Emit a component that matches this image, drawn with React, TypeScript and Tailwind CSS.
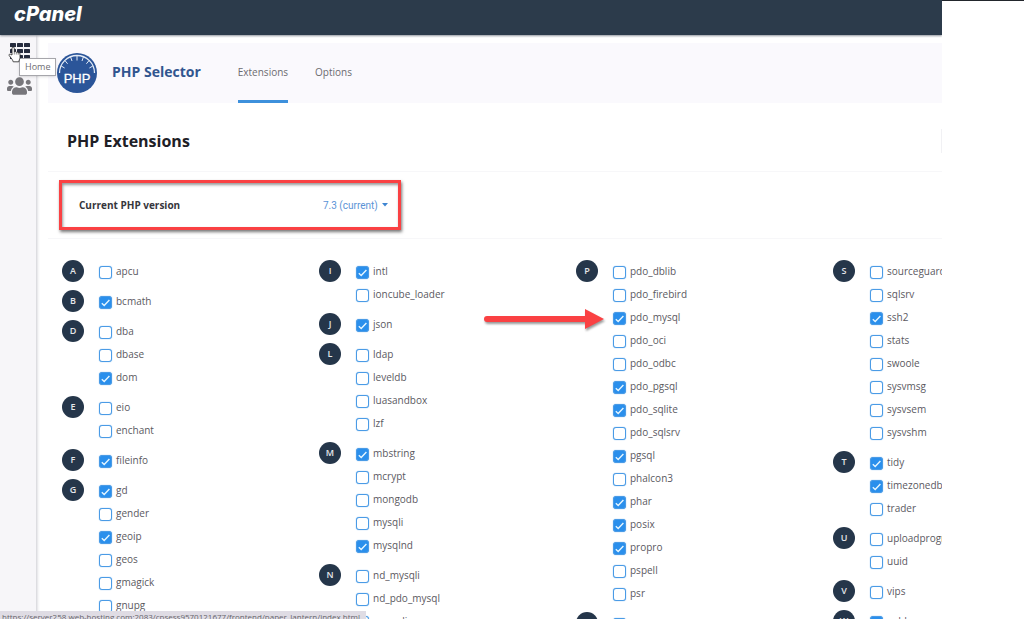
import { FaUsers } from "react-icons/fa";

type Extension = { name: string; on?: boolean };
type Group = { letter: string; items: Extension[] };

const columns: Group[][] = [
  [
    { letter: "A", items: [{ name: "apcu" }] },
    { letter: "B", items: [{ name: "bcmath", on: true }] },
    { letter: "D", items: [{ name: "dba" }, { name: "dbase" }, { name: "dom", on: true }] },
    { letter: "E", items: [{ name: "eio" }, { name: "enchant" }] },
    { letter: "F", items: [{ name: "fileinfo", on: true }] },
    {
      letter: "G",
      items: [
        { name: "gd", on: true },
        { name: "gender" },
        { name: "geoip", on: true },
        { name: "geos" },
        { name: "gmagick" },
        { name: "gnupg" },
      ],
    },
  ],
  [
    { letter: "I", items: [{ name: "intl", on: true }, { name: "ioncube_loader" }] },
    { letter: "J", items: [{ name: "json", on: true }] },
    {
      letter: "L",
      items: [{ name: "ldap" }, { name: "leveldb" }, { name: "luasandbox" }, { name: "lzf" }],
    },
    {
      letter: "M",
      items: [
        { name: "mbstring", on: true },
        { name: "mcrypt" },
        { name: "mongodb" },
        { name: "mysqli" },
        { name: "mysqlnd", on: true },
      ],
    },
    { letter: "N", items: [{ name: "nd_mysqli" }, { name: "nd_pdo_mysql" }, { name: "newrelic" }] },
  ],
  [
    {
      letter: "P",
      items: [
        { name: "pdo_dblib" },
        { name: "pdo_firebird" },
        { name: "pdo_mysql", on: true },
        { name: "pdo_oci" },
        { name: "pdo_odbc" },
        { name: "pdo_pgsql", on: true },
        { name: "pdo_sqlite", on: true },
        { name: "pdo_sqlsrv" },
        { name: "pgsql", on: true },
        { name: "phalcon3" },
        { name: "phar", on: true },
        { name: "posix", on: true },
        { name: "propro", on: true },
        { name: "pspell" },
        { name: "psr" },
      ],
    },
    { letter: "R", items: [{ name: "raphf", on: true }] },
  ],
  [
    {
      letter: "S",
      items: [
        { name: "sourceguardian" },
        { name: "sqlsrv" },
        { name: "ssh2", on: true },
        { name: "stats" },
        { name: "swoole" },
        { name: "sysvmsg" },
        { name: "sysvsem" },
        { name: "sysvshm" },
      ],
    },
    {
      letter: "T",
      items: [{ name: "tidy", on: true }, { name: "timezonedb", on: true }, { name: "trader" }],
    },
    { letter: "U", items: [{ name: "uploadprogress" }, { name: "uuid" }] },
    { letter: "V", items: [{ name: "vips" }] },
    { letter: "W", items: [{ name: "wddx", on: true }] },
  ],
];

const ExtensionRow = ({ name, on }: Extension) => (
  <li className="h-[23px]">
    <label className="flex h-full items-center gap-1">
      <span className="grid place-items-center pt-px">
        <input
          type="checkbox"
          defaultChecked={on}
          className="peer col-start-1 row-start-1 size-[13px] appearance-none rounded-[3px] border border-[#4a9be6] bg-white shadow-[0_0_1px_#4a9be6] checked:bg-[#2a8fec]"
        />
        <svg
          viewBox="0 0 13 13"
          className="pointer-events-none invisible col-start-1 row-start-1 size-[13px] peer-checked:visible"
        >
          <path d="M2.8 7.2 5.2 9.5 10.4 4" fill="none" stroke="#e6f6ff" strokeWidth="1.4" />
        </svg>
      </span>
      <span>{name}</span>
    </label>
  </li>
);

const ExtensionGroup = ({ letter, items }: Group) => (
  <section className="flex items-start gap-[15px]">
    <h3 className="grid size-[22px] place-items-center rounded-full bg-[#25364a] text-[9px] font-semibold text-gray-200">
      {letter}
    </h3>
    <ul>
      {items.map((item) => (
        <ExtensionRow key={item.name} {...item} />
      ))}
    </ul>
  </section>
);

const PhpLogo = () => (
  <svg viewBox="0 0 40 40" className="size-10">
    <circle cx="20" cy="20" r="20" fill="#2b5599" />
    <path d="M2.500 20a17.500 17.500 0 0 1 35 0" fill="none" stroke="#e3ebf6" strokeWidth="1.3" />
    <path
      d="M20 2.500v5M13.600 4l1.400 4M26.400 4 25 8M8 7.600l2.600 3.200M32 7.600l-2.600 3.200M4.200 13l3.400 2M35.800 13l-3.400 2"
      stroke="#e3ebf6"
      strokeWidth="1"
    />
    <text
      x="20"
      y="30"
      textAnchor="middle"
      fontFamily="Liberation Sans, sans-serif"
      fontSize="13"
      fill="#fff"
      stroke="#fff"
      strokeWidth="0.3"
    >
      PHP
    </text>
  </svg>
);

const Sidebar = () => (
  <aside className="relative w-9 shrink-0 bg-[#f7f6f9] shadow-[1px_0_3px_#c9c8cf]">
    <nav className="flex flex-col items-center gap-[17px] pt-2 pr-px pl-1">
      <a href="#home" aria-label="Home">
        <svg viewBox="0 0 20 16" className="h-4 w-5" fill="#262c3e">
          {[0, 6, 12].map((y) =>
            [0, 7, 14].map((x) => (
              <rect key={`${x}-${y}`} x={x} y={y} width="6" height="4" rx="0.6" />
            ))
          )}
        </svg>
      </a>
      <a href="#users" aria-label="User Manager">
        <FaUsers className="h-5 w-[25px] text-[#77767b]" />
      </a>
    </nav>

    {/* Tooltip */}
    <div className="absolute top-[23px] left-[19px] z-10 border border-[#a6a6ab] bg-white px-[5px] text-[9px] leading-4 text-[#6d6d72] shadow-sm">
      Home
    </div>

    {/* Pointer */}
    <svg viewBox="0 0 14 17" className="absolute top-[11px] left-[8px] z-20 h-[17px] w-[14px]">
      <path
        d="M4 9V2.2C4 .6 6.3.6 6.3 2.2V6c.6-.7 1.8-.5 2 .3.7-.5 1.7-.2 1.9.6.8-.3 1.8.2 1.8 1.2v3.4c0 1.6-1 2.3-1.2 4.3H5.2C4.8 13.6 2.6 11.6 1.2 9.6.5 8.5 1.9 7.6 2.800 8.400Z"
        fill="#fff"
        stroke="#222"
        strokeWidth="0.8"
      />
      <path d="M6.3 6v2.500M8.300 6.400v2.100M10.200 7v1.800" stroke="#222" strokeWidth="0.5" />
    </svg>
  </aside>
);

const App = () => {
  return (
    <div className="relative h-screen overflow-hidden bg-white font-['Open_Sans',sans-serif]">
      <div className="flex h-full w-[92%] flex-col overflow-hidden">
        <header className="z-10 flex h-[35px] shrink-0 items-center bg-[#2c3b4b] px-3.5 pb-2 shadow-[0_1px_2px_#8e939c]">
          <a
            href="#cpanel"
            className="font-['Inter',sans-serif] text-[20px] leading-5 font-extrabold text-white italic"
          >
            cPanel
          </a>
        </header>

        <div className="flex min-h-0 flex-1">
          <Sidebar />

          <main className="relative min-w-0 flex-1 pt-2 pl-3">
            {/* Title bar */}
            <div className="flex h-[60px] items-stretch bg-[#faf9fd] pl-[9px]">
              <div className="flex items-center gap-[15px]">
                <PhpLogo />
                <h1 className="pb-1 text-[14px] font-bold text-[#31558f]">PHP Selector</h1>
              </div>
              <nav className="ml-[37px] flex gap-[27px] text-[10px] text-[#6c6b70]">
                <a href="#extensions" className="flex items-center border-b-3 border-[#3d90dc] pt-0.5">
                  Extensions
                </a>
                <a href="#options" className="flex items-center border-b-3 border-transparent pt-0.5">
                  Options
                </a>
              </nav>
            </div>

            <div className="flex h-[69px] items-center border-b border-[#f7f7f9] pt-2 pl-[19px]">
              <h2 className="flex-1 border-r border-[#f1f1f4] text-[16px] font-bold text-[#202026]">
                PHP Extensions
              </h2>
            </div>

            <div className="border-b border-[#f7f7f9] py-2 pl-[11px]">
              <div className="flex h-[50px] w-[342px] items-center justify-between border-3 border-[#fa4143] pr-2.5 pl-[17px] shadow-[1px_2px_3px_#777,inset_1px_2px_3px_#999]">
                <label htmlFor="php-version" className="text-[10px] font-bold text-[#36363c]">
                  Current PHP version
                </label>
                <div className="flex items-center gap-1 text-[#5a93d6]">
                  <select
                    id="php-version"
                    className="appearance-none bg-transparent font-['Roboto',sans-serif] text-[10px]"
                  >
                    <option>7.3 (current)</option>
                  </select>
                  <svg viewBox="0 0 6 4" className="h-1 w-1.5" fill="#3e85d2">
                    <path d="M0 0h6L3 3.5Z" />
                  </svg>
                </div>
              </div>
            </div>

            <div className="grid grid-cols-[repeat(4,257px)] pt-[21px] pl-3.5 text-[10px] text-[#5b595f]">
              {columns.map((groups) => (
                <div key={groups[0].letter} className="flex flex-col gap-[7px]">
                  {groups.map((group) => (
                    <ExtensionGroup key={group.letter} {...group} />
                  ))}
                </div>
              ))}
            </div>

            {/* Arrow pointing at pdo_mysql */}
            <svg
              viewBox="0 0 122 24"
              className="absolute top-[272px] left-[447px] h-6 w-[122px] drop-shadow-[1px_2px_1px_#0006]"
            >
              <path d="M4 12H104" stroke="#fa4143" strokeWidth="6" strokeLinecap="round" />
              <path d="M102 2 121 12 102 22Z" fill="#fa4143" />
            </svg>
          </main>
        </div>
      </div>

      {/* Window edge beside the page */}
      <div className="absolute top-0 right-0 h-px w-[8%] bg-[#22262c]" />

      {/* Browser status bar */}
      <div className="absolute bottom-0 left-0 h-2 overflow-hidden bg-[#dfdce4] pr-1.5 pl-0.5 text-[8px] leading-3 text-[#66646b]">
        https://server258.web-hosting.com:2083/cpsess9570121677/frontend/paper_lantern/index.html
      </div>
    </div>
  );
};

export default App;
